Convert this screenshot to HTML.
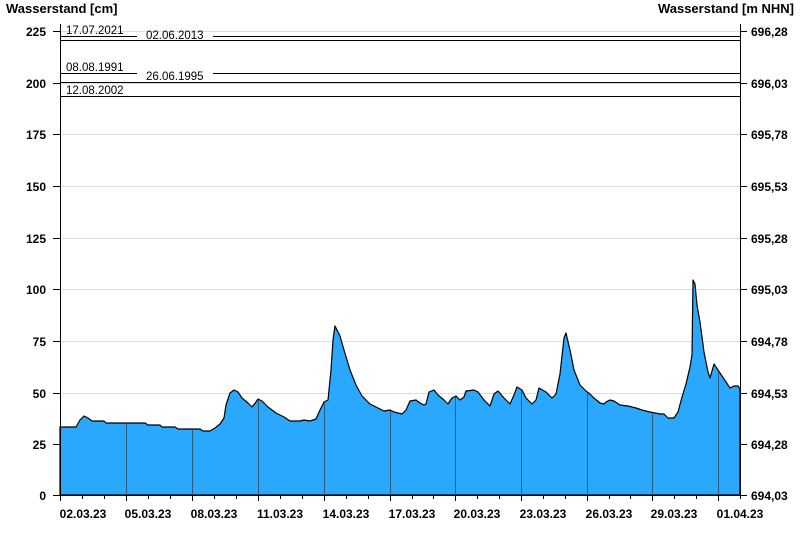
<!DOCTYPE html>
<html><head><style>
html,body{margin:0;padding:0;background:#fff;}
svg{display:block;font-family:"Liberation Sans",Arial,sans-serif;}
.b{font-weight:bold;font-size:12px;fill:#000;}
.s{font-size:11.5px;fill:#000;}
</style></head><body>
<svg width="800" height="550" viewBox="0 0 800 550">
<text x="6" y="13" class="b" style="font-size:13px">Wasserstand [cm]</text>
<text x="794" y="13" class="b" text-anchor="end" style="font-size:13px">Wasserstand [m NHN]</text>
<g stroke="#dcdcdc" stroke-width="1">
<line x1="60" x2="740" y1="31.5" y2="31.5"/><line x1="60" x2="740" y1="83.5" y2="83.5"/>
<line x1="60" x2="740" y1="134.5" y2="134.5"/><line x1="60" x2="740" y1="186.5" y2="186.5"/>
<line x1="60" x2="740" y1="238.5" y2="238.5"/><line x1="60" x2="740" y1="289.5" y2="289.5"/>
<line x1="60" x2="740" y1="341.5" y2="341.5"/><line x1="60" x2="740" y1="393.5" y2="393.5"/>
<line x1="60" x2="740" y1="444.5" y2="444.5"/>
</g>
<polygon fill="#29a8fd" stroke="#000" stroke-width="1.2" stroke-linejoin="round" points="60,495 60,427 76,427 80,420 84,416 88,418 92,421 104,421 106,423 145,423 148,425 160,425 162,427 175,427 178,429 200,429 203,431 210,431 215,428 220,424 224,418 226,405 230,393 234,390 238,392 242,398 248,403 252,407 256,402 258,399 262,401 268,407 276,413 284,417 290,421 300,421 304,420 310,421 316,419 320,410 324,402 328,400 331,370 333,340 335,326 340,336 344,350 350,370 356,385 362,396 370,404 378,408 384,411 390,410 394,412 402,414 406,410 410,401 416,400 420,403 424,405 426,404 429,392 434,390 438,395 444,400 448,404 452,398 456,396 460,400 464,397 466,391 474,390 478,392 484,400 490,406 494,394 498,391 504,398 510,404 514,395 517,387 522,390 526,398 532,404 536,400 539,388 546,392 552,398 556,394 560,374 564,338 566,333 570,350 574,370 580,385 586,391 590,394 594,398 600,403 604,404 606,402 610,400 614,401 620,405 628,406 636,408 642,410 650,412 660,414 664,414 668,418 674,418 678,412 682,397 686,384 690,367 692,355 693,280 695,284 697,305 700,322 704,352 708,372 710,378 714,364 718,370 722,376 726,382 730,388 734,386 738,386 740,389 740,495"/>
<g stroke="#2b5a7a" stroke-width="1">
<line x1="126.5" x2="126.5" y1="424" y2="495"/><line x1="192.5" x2="192.5" y1="430" y2="495"/>
<line x1="258.5" x2="258.5" y1="400" y2="495"/><line x1="324.5" x2="324.5" y1="403" y2="495"/>
<line x1="390.5" x2="390.5" y1="411" y2="495"/><line x1="455.5" x2="455.5" y1="397" y2="495"/>
<line x1="521.5" x2="521.5" y1="390" y2="495"/><line x1="587.5" x2="587.5" y1="393" y2="495"/>
<line x1="652.5" x2="652.5" y1="413" y2="495"/><line x1="718.5" x2="718.5" y1="371" y2="495"/>
</g>
<g stroke="#000" stroke-width="1">
<line x1="60.5" x2="60.5" y1="24" y2="495"/><line x1="740.5" x2="740.5" y1="24" y2="495"/>
<line x1="60" x2="741" y1="495.5" y2="495.5"/>
<line x1="60" x2="137" y1="36.5" y2="36.5"/><line x1="213" x2="740" y1="36.5" y2="36.5"/>
<line x1="60" x2="740" y1="40.5" y2="40.5"/>
<line x1="60" x2="137" y1="73.5" y2="73.5"/><line x1="213" x2="740" y1="73.5" y2="73.5"/>
<line x1="60" x2="740" y1="82.5" y2="82.5"/>
<line x1="60" x2="740" y1="96.5" y2="96.5"/>
</g>
<g stroke="#000" stroke-width="1">
<line x1="53" x2="60" y1="31.5" y2="31.5"/><line x1="53" x2="60" y1="83.5" y2="83.5"/>
<line x1="53" x2="60" y1="134.5" y2="134.5"/><line x1="53" x2="60" y1="186.5" y2="186.5"/>
<line x1="53" x2="60" y1="238.5" y2="238.5"/><line x1="53" x2="60" y1="289.5" y2="289.5"/>
<line x1="53" x2="60" y1="341.5" y2="341.5"/><line x1="53" x2="60" y1="393.5" y2="393.5"/>
<line x1="53" x2="60" y1="444.5" y2="444.5"/><line x1="53" x2="60" y1="495.5" y2="495.5"/>
<line x1="740" x2="747" y1="31.5" y2="31.5"/><line x1="740" x2="747" y1="83.5" y2="83.5"/>
<line x1="740" x2="747" y1="134.5" y2="134.5"/><line x1="740" x2="747" y1="186.5" y2="186.5"/>
<line x1="740" x2="747" y1="238.5" y2="238.5"/><line x1="740" x2="747" y1="289.5" y2="289.5"/>
<line x1="740" x2="747" y1="341.5" y2="341.5"/><line x1="740" x2="747" y1="393.5" y2="393.5"/>
<line x1="740" x2="747" y1="444.5" y2="444.5"/><line x1="740" x2="747" y1="495.5" y2="495.5"/>
</g>
<text class="s" x="66" y="34">17.07.2021</text>
<text class="s" x="146" y="39">02.06.2013</text>
<text class="s" x="66" y="71">08.08.1991</text>
<text class="s" x="146" y="80">26.06.1995</text>
<text class="s" x="66" y="94">12.08.2002</text>
<g class="b" text-anchor="end">
<text x="46" y="36">225</text><text x="46" y="88">200</text><text x="46" y="139">175</text>
<text x="46" y="191">150</text><text x="46" y="243">125</text><text x="46" y="294">100</text>
<text x="46" y="346">75</text><text x="46" y="398">50</text><text x="46" y="449">25</text><text x="46" y="500">0</text>
</g>
<g class="b">
<text x="751" y="36">696,28</text><text x="751" y="88">696,03</text><text x="751" y="139">695,78</text>
<text x="751" y="191">695,53</text><text x="751" y="243">695,28</text><text x="751" y="294">695,03</text>
<text x="751" y="346">694,78</text><text x="751" y="398">694,53</text><text x="751" y="449">694,28</text><text x="751" y="500">694,03</text>
</g>
<g class="b" text-anchor="middle">
<text x="83" y="518">02.03.23</text><text x="148" y="518">05.03.23</text><text x="214" y="518">08.03.23</text>
<text x="280" y="518">11.03.23</text><text x="346" y="518">14.03.23</text><text x="412" y="518">17.03.23</text>
<text x="477" y="518">20.03.23</text><text x="543" y="518">23.03.23</text><text x="609" y="518">26.03.23</text>
<text x="674" y="518">29.03.23</text><text x="740" y="518">01.04.23</text>
</g>
<path stroke="#000" stroke-width="1" d="M60.5 495v6M82.5 495v4M104.5 495v4M126.5 495v6M148.5 495v4M170.5 495v4M192.5 495v6M214.5 495v4M236.5 495v4M258.5 495v6M280.5 495v4M302.5 495v4M324.5 495v6M346.5 495v4M368.5 495v4M390.5 495v6M412.5 495v4M433.5 495v4M455.5 495v6M477.5 495v4M499.5 495v4M521.5 495v6M543.5 495v4M565.5 495v4M587.5 495v6M609.5 495v4M630.5 495v4M652.5 495v6M674.5 495v4M696.5 495v4M718.5 495v6M740.5 495v4"/>
</svg>
</body></html>
